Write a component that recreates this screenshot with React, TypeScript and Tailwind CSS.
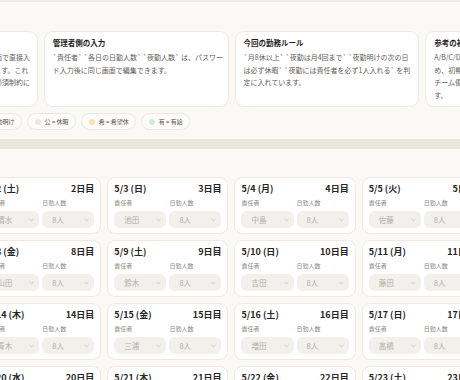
import React from "react";

const WEEK = ["日", "月", "火", "水", "木", "金", "土"];

const NAMES = [
  "伊藤", "清水", "池田", "中島", "佐藤", "小林",
  "加藤", "山田", "鈴木", "吉田", "藤田", "松本",
  "井上", "青木", "三浦", "増田", "高橋", "渡辺",
  "山本", "中村", "森", "石川", "斎藤", "前田",
];

const INFO = [
  {
    title: "スタッフ側の入力",
    lines: [
      "各スタッフは希望休と有給を専用の入力画面で直接入",
      "力します。提出した内容は自動で保存されます。これ",
      "らの希望は自動で勤務表を作成するときの必須制約に",
      "なります。",
    ],
  },
  {
    title: "管理者側の入力",
    lines: [
      "`責任者` `各日の日勤人数` `夜勤人数` は、パスワー",
      "ド入力後に同じ画面で編集できます。",
    ],
  },
  {
    title: "今回の勤務ルール",
    lines: [
      "`月8休以上` `夜勤は月4回まで` `夜勤明けの次の日",
      "は必ず休暇` `夜勤には責任者を必ず1人入れる` を判",
      "定に入れています。",
    ],
  },
  {
    title: "参考の初期配置",
    lines: [
      "A/B/C/Dは前月までの配置を参考に表示しているた",
      "め、初期配置では各日の担当をなるべく同じにして、",
      "チーム優先の組み合わせを基本に自動で作成していま",
      "す。",
    ],
  },
];

const LEGEND = [
  { label: "日 = 日勤", dot: "bg-[#cfe0f5]" },
  { label: "夜 = 夜勤", dot: "bg-[#ddd3f2]" },
  { label: "明 = 夜勤明け", dot: "bg-[#f3d6e0]" },
  { label: "公 = 休暇", dot: "bg-[#ebe7e1]" },
  { label: "希 = 希望休", dot: "bg-[#fbdfb3]" },
  { label: "有 = 有給", dot: "bg-[#d3ecd6]" },
];

function Chevron() {
  return (
    <svg width="5" height="4" viewBox="0 0 5 4" className="shrink-0">
      <path d="M0.8 1.2 L2.5 2.8 L4.2 1.2" fill="none" stroke="#c4bfb7" strokeWidth="0.8" strokeLinecap="round" />
    </svg>
  );
}

function FakeSelect({ value }: { value: string }) {
  return (
    <div className="flex h-[17px] items-center justify-between rounded-[6px] bg-[#f2f0eb] pl-[10px] pr-[5px] text-[7.5px] text-[#b3afa8]">
      <span>{value}</span>
      <Chevron />
    </div>
  );
}

function DayCard({ day }: { day: number }) {
  const wd = WEEK[(5 + day - 1) % 7];
  return (
    <div className="h-[57px] rounded-[8px] border border-[#eeeae3] bg-white px-[6px] pt-[5px]">
      <div className="flex h-[12px] items-center justify-between text-[9px] font-bold leading-[12px] text-[#262626]">
        <span>
          5/{day} ({wd})
        </span>
        <span>{day}日目</span>
      </div>
      <div className="mt-[4px] grid grid-cols-2 gap-[3px]">
        <div>
          <div className="h-[8px] text-[6px] leading-[8px] text-[#8c877f]">責任者</div>
          <div className="mt-[4px]">
            <FakeSelect value={NAMES[day - 1]} />
          </div>
        </div>
        <div>
          <div className="h-[8px] text-[6px] leading-[8px] text-[#8c877f]">日勤人数</div>
          <div className="mt-[4px]">
            <FakeSelect value="8人" />
          </div>
        </div>
      </div>
    </div>
  );
}

export default function App() {
  const days = Array.from({ length: 24 }, (_, i) => i + 1);

  return (
    <div className="h-[380px] w-[460px] overflow-hidden bg-[#fbf9f5] font-['Noto_Sans_CJK_JP','Noto_Sans',sans-serif]">
      <div className="h-[2px] bg-[#eeebe5]" />

      <div className="ml-[-147px] w-[757px] pt-[29px]">
        <div className="grid grid-cols-4 gap-[6px]">
          {INFO.map((card) => (
            <div
              key={card.title}
              className="h-[76px] rounded-[9px] border border-[#eeeae3] bg-white px-[8px] pt-[6px]"
            >
              <p className="h-[10px] text-[7.5px] font-bold leading-[10px] text-[#1f1f1f]">
                {card.title}
              </p>
              <p className="mt-[3px] whitespace-nowrap text-[7px] leading-[12.5px] text-[#625e58]">
                {card.lines.map((l, i) => (
                  <span key={i} className="block">
                    {l}
                  </span>
                ))}
              </p>
            </div>
          ))}
        </div>

        <div className="mt-[6px] flex gap-[5px]">
          {LEGEND.map((item) => (
            <div
              key={item.label}
              className="flex h-[17px] items-center gap-[4px] rounded-full border border-[#ece8e1] bg-[#fdfcfa] px-[6.5px] text-[6px] text-[#55514c]"
            >
              <span className={`h-[6px] w-[6px] rounded-full ${item.dot}`} />
              <span className="whitespace-nowrap">{item.label}</span>
            </div>
          ))}
        </div>
      </div>

      <div className="mt-[9px] h-[10px] bg-[#ebe7df]" />

      <div className="ml-[-147px] grid w-[757px] grid-cols-6 gap-[6px] pt-[28px]">
        {days.map((d) => (
          <DayCard key={d} day={d} />
        ))}
      </div>
    </div>
  );
}
